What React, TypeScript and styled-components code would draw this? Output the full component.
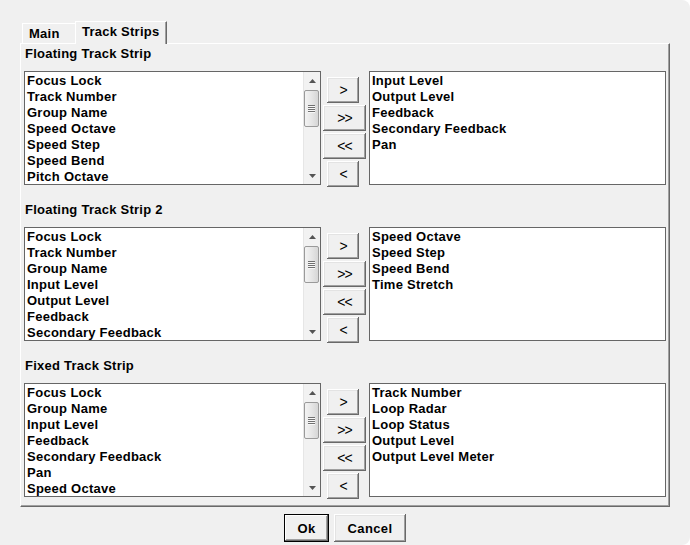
import React from "react";
import styled, { createGlobalStyle } from "styled-components";

const GlobalStyle = createGlobalStyle`
  html, body { margin: 0; padding: 0; background: #ffffff; }
  #root { width: 690px; height: 545px; }
`;

const Window = styled.div`
  width: 690px;
  height: 545px;
  box-sizing: border-box;
  background: #f0f0f0;
  padding-top: 21px;
  display: flex;
  flex-direction: column;
  font-family: "Liberation Sans", Arial, sans-serif;
  font-weight: bold;
  font-size: 13px;
  letter-spacing: 0.25px;
  color: #000;
  border-top-right-radius: 8px;
  border-bottom-right-radius: 8px;
  overflow: hidden;
`;

const TabArea = styled.div`
  margin-left: 20px;
  display: flex;
  flex-direction: column;
`;

const TabBar = styled.div`
  display: flex;
  align-items: flex-end;
  height: 22px;
  padding-left: 2px;
  position: relative;
  z-index: 1;
`;

const Tab = styled.div<{ $active?: boolean; $w: number }>`
  box-sizing: border-box;
  width: ${(p) => p.$w}px;
  height: ${(p) => (p.$active ? 23 : 20)}px;
  margin-bottom: ${(p) => (p.$active ? -1 : 0)}px;
  padding: 1px 0 0 6px;
  line-height: 18px;
  background: #f0f0f0;
  border-top: 1px solid #ffffff;
  border-left: 1px solid #ffffff;
  border-right: ${(p) => (p.$active ? "1px solid #696969" : "none")};
  box-shadow: ${(p) => (p.$active ? "inset -1px 0 #a0a0a0" : "none")};
  white-space: nowrap;
`;

const Panel = styled.div`
  box-sizing: border-box;
  width: 650px;
  height: 464px;
  border: 1px solid;
  border-color: #ffffff #696969 #696969 #ffffff;
  box-shadow: inset -1px -1px #a0a0a0;
  padding-left: 3px;
  display: flex;
  flex-direction: column;
  gap: 15px;
`;

const Section = styled.div`
  display: flex;
  flex-direction: column;
`;

const SectionLabel = styled.div`
  box-sizing: border-box;
  height: 27px;
  padding: 1px 0 0 1px;
  line-height: 18px;
`;

const Row = styled.div`
  display: flex;
  height: 114px;
`;

const ListBox = styled.div`
  box-sizing: border-box;
  width: 297px;
  height: 114px;
  border: 1px solid #666666;
  background: #ffffff;
  display: flex;
  overflow: hidden;
`;

const Items = styled.div`
  flex: 1;
  padding: 1px 0 0 2px;
  overflow: hidden;
`;

const Item = styled.div`
  height: 16px;
  line-height: 16px;
  white-space: nowrap;
`;

const ScrollBar = styled.div`
  width: 17px;
  display: flex;
  flex-direction: column;
  background: #f2f2f2;
  border-left: 1px solid #e6e6e6;
  box-sizing: border-box;
`;

const ArrowBox = styled.div`
  height: 17px;
  display: flex;
  align-items: center;
  justify-content: center;
`;

const Track = styled.div`
  flex: 1;
  padding-top: 1px;
`;

const Thumb = styled.div`
  box-sizing: border-box;
  width: 15px;
  height: 37px;
  border: 1px solid #9a9a9a;
  border-radius: 2px;
  background: linear-gradient(90deg, #f3f3f3 0%, #e6e6e6 50%, #d6d6d6 100%);
  display: flex;
  flex-direction: column;
  align-items: center;
  justify-content: center;
  gap: 1px;
`;

const Grip = styled.div`
  width: 7px;
  height: 1px;
  background: #707070;
  box-shadow: 0 1px #f8f8f8;
`;

const ButtonColumn = styled.div`
  width: 48px;
  display: flex;
  flex-direction: column;
  padding-top: 6px;
  gap: 2px;
`;

const MoveButton = styled.button<{ $wide?: boolean }>`
  box-sizing: border-box;
  width: ${(p) => (p.$wide ? 43 : 32)}px;
  height: 26px;
  margin-left: ${(p) => (p.$wide ? 2 : 6)}px;
  padding: 0;
  border: none;
  background: #f0f0f0;
  box-shadow: inset -1px -1px #696969, inset 1px 1px #ffffff,
    inset -2px -2px #a0a0a0, inset 2px 2px #e3e3e3;
  font-family: "Liberation Sans", Arial, sans-serif;
  font-size: 14px;
  font-weight: normal;
  color: #000;
  letter-spacing: -1px;
  flex-shrink: 0;
`;

const Footer = styled.div`
  display: flex;
  justify-content: center;
  gap: 5px;
  margin-top: 7px;
`;

const DialogButton = styled.button<{ $default?: boolean; $w: number }>`
  box-sizing: border-box;
  width: ${(p) => p.$w}px;
  height: 28px;
  padding: 0;
  background: #f0f0f0;
  border: ${(p) => (p.$default ? "1px solid #000000" : "none")};
  box-shadow: ${(p) =>
    p.$default
      ? "inset -1px -1px #696969, inset 1px 1px #ffffff, inset -2px -2px #a0a0a0"
      : "inset -1px -1px #696969, inset 1px 1px #ffffff, inset -2px -2px #a0a0a0, inset 2px 2px #e3e3e3"};
  font-family: "Liberation Sans", Arial, sans-serif;
  font-size: 13px;
  font-weight: bold;
  letter-spacing: 0.4px;
  color: #000;
`;

const ArrowUp = () => (
  <svg width="7" height="4" viewBox="0 0 7 4">
    <polygon points="3.5,0 7,4 0,4" fill="#555" />
  </svg>
);
const ArrowDown = () => (
  <svg width="7" height="4" viewBox="0 0 7 4">
    <polygon points="0,0 7,0 3.5,4" fill="#555" />
  </svg>
);

const List: React.FC<{ items: string[]; scroll?: boolean }> = ({ items, scroll }) => (
  <ListBox>
    <Items>
      {items.map((t) => (
        <Item key={t}>{t}</Item>
      ))}
    </Items>
    {scroll && (
      <ScrollBar>
        <ArrowBox>
          <ArrowUp />
        </ArrowBox>
        <Track>
          <Thumb>
            <Grip />
            <Grip />
            <Grip />
            <Grip />
          </Thumb>
        </Track>
        <ArrowBox>
          <ArrowDown />
        </ArrowBox>
      </ScrollBar>
    )}
  </ListBox>
);

const sections = [
  {
    title: "Floating Track Strip",
    left: [
      "Focus Lock",
      "Track Number",
      "Group Name",
      "Speed Octave",
      "Speed Step",
      "Speed Bend",
      "Pitch Octave",
    ],
    right: ["Input Level", "Output Level", "Feedback", "Secondary Feedback", "Pan"],
  },
  {
    title: "Floating Track Strip 2",
    left: [
      "Focus Lock",
      "Track Number",
      "Group Name",
      "Input Level",
      "Output Level",
      "Feedback",
      "Secondary Feedback",
    ],
    right: ["Speed Octave", "Speed Step", "Speed Bend", "Time Stretch"],
  },
  {
    title: "Fixed Track Strip",
    left: [
      "Focus Lock",
      "Group Name",
      "Input Level",
      "Feedback",
      "Secondary Feedback",
      "Pan",
      "Speed Octave",
    ],
    right: ["Track Number", "Loop Radar", "Loop Status", "Output Level", "Output Level Meter"],
  },
];

export default function App() {
  return (
    <>
      <GlobalStyle />
      <Window>
        <TabArea>
          <TabBar>
            <Tab $w={53}>Main</Tab>
            <Tab $w={92} $active>
              Track Strips
            </Tab>
          </TabBar>
          <Panel>
            {sections.map((s) => (
              <Section key={s.title}>
                <SectionLabel>{s.title}</SectionLabel>
                <Row>
                  <List items={s.left} scroll />
                  <ButtonColumn>
                    <MoveButton>&gt;</MoveButton>
                    <MoveButton $wide>&gt;&gt;</MoveButton>
                    <MoveButton $wide>&lt;&lt;</MoveButton>
                    <MoveButton>&lt;</MoveButton>
                  </ButtonColumn>
                  <List items={s.right} />
                </Row>
              </Section>
            ))}
          </Panel>
        </TabArea>
        <Footer>
          <DialogButton $default $w={45}>
            Ok
          </DialogButton>
          <DialogButton $w={72}>Cancel</DialogButton>
        </Footer>
      </Window>
    </>
  );
}
